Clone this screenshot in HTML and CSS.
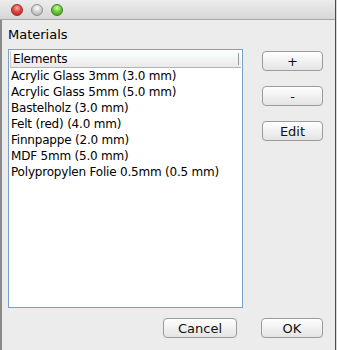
FILE: index.html
```html
<!DOCTYPE html>
<html lang="en">

<head>
    <meta charset="UTF-8">
    <title>Materials</title>
    <link rel="stylesheet" href="styles.css">
</head>

<body>
    <div class="window">
        <!-- Barra del titolo -->
        <div class="titlebar">
            <span class="light red"></span>
            <span class="light gray"></span>
            <span class="light green"></span>
        </div>

        <div class="content">
            <div class="label">Materials</div>

            <div class="row">
                <div class="list">
                    <div class="list-header">
                        <span class="header-cell">Elements</span>
                        <span class="header-corner"></span>
                    </div>
                    <div class="item">Acrylic Glass 3mm (3.0 mm)</div>
                    <div class="item">Acrylic Glass 5mm (5.0 mm)</div>
                    <div class="item">Bastelholz (3.0 mm)</div>
                    <div class="item">Felt (red) (4.0 mm)</div>
                    <div class="item">Finnpappe (2.0 mm)</div>
                    <div class="item">MDF 5mm (5.0 mm)</div>
                    <div class="item">Polypropylen Folie 0.5mm (0.5 mm)</div>
                </div>

                <div class="side">
                    <button class="btn side-btn">+</button>
                    <button class="btn side-btn">-</button>
                    <button class="btn side-btn">Edit</button>
                </div>
            </div>

            <!-- Pulsanti in basso -->
            <div class="footer">
                <button class="btn cancel-btn">Cancel</button>
                <button class="btn ok-btn">OK</button>
            </div>
        </div>
    </div>
</body>

</html>
```

FILE: styles.css
```css
body {
    margin: 0;
    background-color: #d8d8d8;
    font-family: 'DejaVu Sans', sans-serif;
    font-size: 12px;
    color: #000;
}

.window {
    width: 336px;
    height: 350px;
    box-sizing: border-box;
    background-color: #ececec;
    border-left: 2px solid #8a8a8a;
    border-right: 1px solid #4a4a4a;
}

.titlebar {
    height: 20px;
    box-sizing: border-box;
    background: linear-gradient(#ececec, #d6d6d6);
    border-bottom: 1px solid #a6a6a6;
    display: flex;
    align-items: center;
    gap: 8px;
    padding-left: 11px;
    margin-left: -2px;
}

.light {
    width: 12px;
    height: 12px;
    border-radius: 50%;
    box-sizing: border-box;
}

.red {
    background: radial-gradient(circle at 50% 30%, #ffb0a8 0, #e2463f 45%, #b0231c 100%);
    border: 1px solid #9b2a25;
}

.gray {
    background: radial-gradient(circle at 50% 30%, #ffffff 0, #d4d4d4 45%, #a9a9a9 100%);
    border: 1px solid #8f8f8f;
}

.green {
    background: radial-gradient(circle at 50% 30%, #d6ffb0 0, #6ccb3c 45%, #3e951c 100%);
    border: 1px solid #3c7d22;
}

.content {
    padding: 7px 12px 0 6px;
}

.label {
    font-size: 13px;
    line-height: 16px;
    height: 22px;
}

.row {
    display: flex;
    align-items: flex-start;
}

.list {
    width: 235px;
    height: 259px;
    box-sizing: border-box;
    border: 1px solid #7a9dcb;
    background-color: #fff;
    padding: 1px 1px 0 1px;
}

.list-header {
    display: flex;
    height: 16px;
    background: linear-gradient(#ffffff, #e9e9e9);
    border-bottom: 1px solid #b5b5b5;
    border-left: 1px solid #cfcfcf;
}

.header-cell {
    flex: 1;
    font-size: 12px;
    line-height: 16px;
    padding-left: 2px;
    letter-spacing: -0.2px;
}

.header-corner {
    width: 2px;
    margin: 2px 0;
    border-left: 1px solid #9c9c9c;
}

.item {
    height: 16px;
    line-height: 16px;
    padding-left: 1px;
    white-space: nowrap;
    letter-spacing: -0.2px;
}

.side {
    display: flex;
    flex-direction: column;
    gap: 15px;
    padding-top: 2px;
    margin-left: 19px;
}

.btn {
    height: 20px;
    box-sizing: border-box;
    font-family: 'DejaVu Sans', sans-serif;
    font-size: 13px;
    line-height: 17px;
    padding: 0;
    color: #111;
    background: linear-gradient(#ffffff, #f1f1f1 50%, #e4e4e4);
    border: 1px solid #9b9b9b;
    border-radius: 4px;
}

.side-btn {
    width: 61px;
}

.footer {
    display: flex;
    justify-content: flex-end;
    gap: 24px;
    margin-top: 10px;
}

.cancel-btn {
    width: 74px;
}

.ok-btn {
    width: 62px;
}
```
